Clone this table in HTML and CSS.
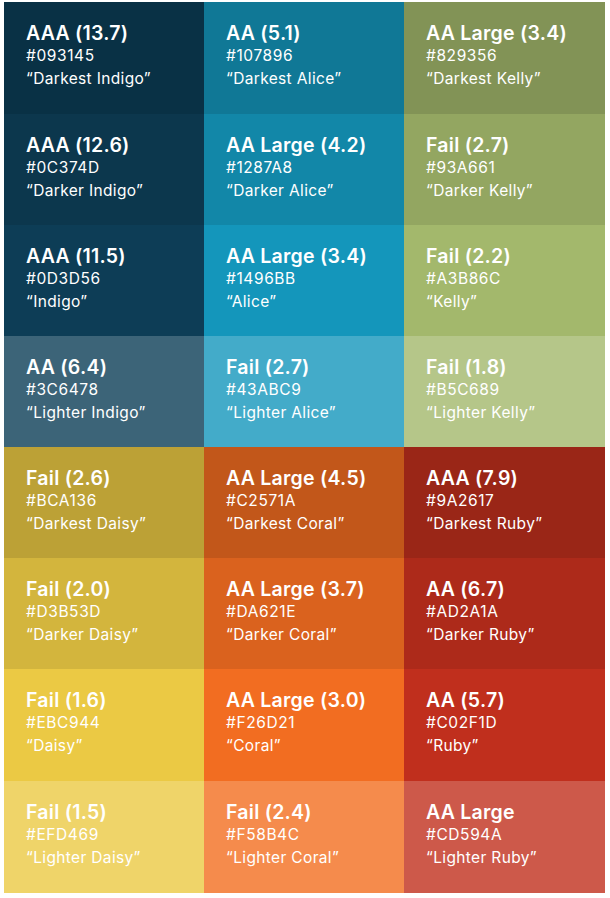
FILE: index.html
```html
<!DOCTYPE html>
<html lang="en">
<head>
<meta charset="utf-8">
<title>Colour contrast palette</title>
<link rel="stylesheet" href="styles.css">
</head>
<body>
<div class="grid">
  <div class="cell c-093145"><div class="t">AAA (13.7)</div><div class="h">#093145</div><div class="n">“Darkest Indigo”</div></div>
  <div class="cell c-107896"><div class="t">AA (5.1)</div><div class="h">#107896</div><div class="n">“Darkest Alice”</div></div>
  <div class="cell c-829356"><div class="t">AA Large (3.4)</div><div class="h">#829356</div><div class="n">“Darkest Kelly”</div></div>

  <div class="cell c-0c374d"><div class="t">AAA (12.6)</div><div class="h">#0C374D</div><div class="n">“Darker Indigo”</div></div>
  <div class="cell c-1287a8"><div class="t">AA Large (4.2)</div><div class="h">#1287A8</div><div class="n">“Darker Alice”</div></div>
  <div class="cell c-93a661"><div class="t">Fail (2.7)</div><div class="h">#93A661</div><div class="n">“Darker Kelly”</div></div>

  <div class="cell c-0d3d56"><div class="t">AAA (11.5)</div><div class="h">#0D3D56</div><div class="n">“Indigo”</div></div>
  <div class="cell c-1496bb"><div class="t">AA Large (3.4)</div><div class="h">#1496BB</div><div class="n">“Alice”</div></div>
  <div class="cell c-a3b86c"><div class="t">Fail (2.2)</div><div class="h">#A3B86C</div><div class="n">“Kelly”</div></div>

  <div class="cell c-3c6478"><div class="t">AA (6.4)</div><div class="h">#3C6478</div><div class="n">“Lighter Indigo”</div></div>
  <div class="cell c-43abc9"><div class="t">Fail (2.7)</div><div class="h">#43ABC9</div><div class="n">“Lighter Alice”</div></div>
  <div class="cell c-b5c689"><div class="t">Fail (1.8)</div><div class="h">#B5C689</div><div class="n">“Lighter Kelly”</div></div>

  <div class="cell c-bca136"><div class="t">Fail (2.6)</div><div class="h">#BCA136</div><div class="n">“Darkest Daisy”</div></div>
  <div class="cell c-c2571a"><div class="t">AA Large (4.5)</div><div class="h">#C2571A</div><div class="n">“Darkest Coral”</div></div>
  <div class="cell c-9a2617"><div class="t">AAA (7.9)</div><div class="h">#9A2617</div><div class="n">“Darkest Ruby”</div></div>

  <div class="cell c-d3b53d"><div class="t">Fail (2.0)</div><div class="h">#D3B53D</div><div class="n">“Darker Daisy”</div></div>
  <div class="cell c-da621e"><div class="t">AA Large (3.7)</div><div class="h">#DA621E</div><div class="n">“Darker Coral”</div></div>
  <div class="cell c-ad2a1a"><div class="t">AA (6.7)</div><div class="h">#AD2A1A</div><div class="n">“Darker Ruby”</div></div>

  <div class="cell c-ebc944"><div class="t">Fail (1.6)</div><div class="h">#EBC944</div><div class="n">“Daisy”</div></div>
  <div class="cell c-f26d21"><div class="t">AA Large (3.0)</div><div class="h">#F26D21</div><div class="n">“Coral”</div></div>
  <div class="cell c-c02f1d"><div class="t">AA (5.7)</div><div class="h">#C02F1D</div><div class="n">“Ruby”</div></div>

  <div class="cell c-efd469"><div class="t">Fail (1.5)</div><div class="h">#EFD469</div><div class="n">“Lighter Daisy”</div></div>
  <div class="cell c-f58b4c"><div class="t">Fail (2.4)</div><div class="h">#F58B4C</div><div class="n">“Lighter Coral”</div></div>
  <div class="cell c-cd594a"><div class="t">AA Large</div><div class="h">#CD594A</div><div class="n">“Lighter Ruby”</div></div>
</div>
</body>
</html>
```

FILE: styles.css
```css
html, body {
  margin: 0;
  padding: 0;
  background: #ffffff;
}
body {
  padding: 2px 0 0 4px;
  font-family: Inter, "Open Sans", sans-serif;
  color: #ffffff;
}
.grid {
  display: grid;
  grid-template-columns: 200px 200px 201px;
  grid-template-rows: 112px 111px 111px 111px 111px 111px 112px 112px;
  width: 601px;
}
.cell {
  padding: 19px 0 0 22px;
  box-sizing: border-box;
}
.t {
  font-size: 19.5px;
  font-weight: 600;
  line-height: 24px;
  letter-spacing: 0.25px;
}
.h {
  font-size: 15.5px;
  font-weight: 400;
  line-height: 22px;
  letter-spacing: 0.6px;
}
.n {
  font-size: 15.5px;
  font-weight: 400;
  line-height: 23px;
  letter-spacing: 0.35px;
}
.c-093145 { background: #093145; }
.c-107896 { background: #107896; }
.c-829356 { background: #829356; }
.c-0c374d { background: #0c374d; }
.c-1287a8 { background: #1287a8; }
.c-93a661 { background: #93a661; }
.c-0d3d56 { background: #0d3d56; }
.c-1496bb { background: #1496bb; }
.c-a3b86c { background: #a3b86c; }
.c-3c6478 { background: #3c6478; }
.c-43abc9 { background: #43abc9; }
.c-b5c689 { background: #b5c689; }
.c-bca136 { background: #bca136; }
.c-c2571a { background: #c2571a; }
.c-9a2617 { background: #9a2617; }
.c-d3b53d { background: #d3b53d; }
.c-da621e { background: #da621e; }
.c-ad2a1a { background: #ad2a1a; }
.c-ebc944 { background: #ebc944; }
.c-f26d21 { background: #f26d21; }
.c-c02f1d { background: #c02f1d; }
.c-efd469 { background: #efd469; }
.c-f58b4c { background: #f58b4c; }
.c-cd594a { background: #cd594a; }
```
